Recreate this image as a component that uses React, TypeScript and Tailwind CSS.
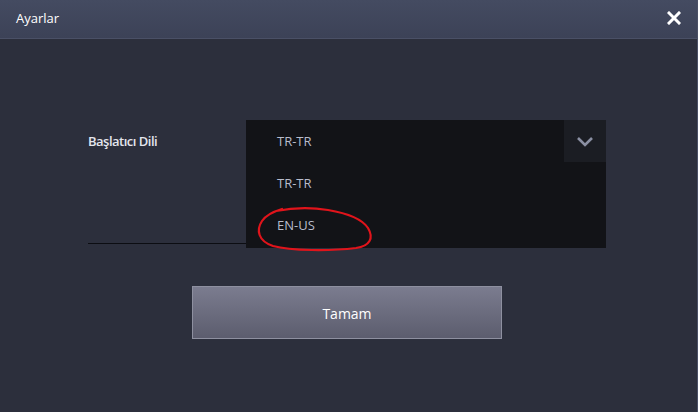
import React from "react";

export default function App() {
  return (
    <div
      className="w-[698px] h-[412px] bg-[#2c2f3c] flex flex-col overflow-hidden border-r border-[#4a5066]"
      style={{ fontFamily: '"Open Sans", "Noto Sans", sans-serif' }}
    >
      <div className="h-[39px] shrink-0 bg-gradient-to-b from-[#444b61] to-[#3c4257] border-b border-[#4a5066] flex items-center justify-between pl-[16px] pr-[16px]">
        <span className="text-[13px] text-white">Ayarlar</span>
        <svg width="14" height="14" viewBox="0 0 14 14" className="mb-[2px]">
          <path d="M2 2 L12 12 M12 2 L2 12" stroke="#ffffff" strokeWidth="3" strokeLinecap="square" />
        </svg>
      </div>
      <div className="flex flex-col">
        <div className="flex pl-[88px] pt-[81px]">
          <div className="w-[158px] h-[124px] border-b border-[#0c0d12] pt-[12px] text-[13px] font-semibold tracking-[-0.5px] text-[#e4e6ee]">
            Başlatıcı Dili
          </div>
          <div className="relative w-[360px] h-[128px] bg-[#121317] flex flex-col">
            <div className="h-[42px] flex items-center justify-between">
              <span className="pl-[31px] pt-[2px] text-[13px] text-[#b8bccb]">TR-TR</span>
              <div className="w-[42px] h-[42px] bg-[#1b1d23] flex items-center justify-center">
                <svg width="18" height="12" viewBox="0 0 18 12">
                  <path d="M2 3 L9 10 L16 3" stroke="#8b90a3" strokeWidth="2.6" fill="none" />
                </svg>
              </div>
            </div>
            <div className="h-[42px] flex items-center pl-[31px] pt-[2px] text-[13px] text-[#b8bccb]">TR-TR</div>
            <div className="h-[42px] flex items-center pl-[31px] pt-[2px] text-[13px] text-[#b8bccb]">EN-US</div>
            <svg
              className="absolute left-0 top-0 pointer-events-none"
              width="360"
              height="140"
              viewBox="0 0 360 140"
            >
              <path
                d="M30 91 C50 87, 70 88, 82 90 C100 93, 116 99, 122 108 C128 118, 124 126, 110 128 C85 131, 45 131, 27 126 C12 121, 10 110, 16 101 C20 95, 26 92, 36 89"
                stroke="#e0141b"
                strokeWidth="2.2"
                fill="none"
                strokeLinecap="round"
              />
            </svg>
          </div>
        </div>
        <div className="pl-[192px] pt-[38px]">
          <div className="w-[310px] h-[53px] bg-gradient-to-b from-[#7b7c8f] to-[#5c5d6e] border border-[#8e90a0] flex items-center justify-center pt-[2px] text-[14px] text-white">
            Tamam
          </div>
        </div>
      </div>
    </div>
  );
}
